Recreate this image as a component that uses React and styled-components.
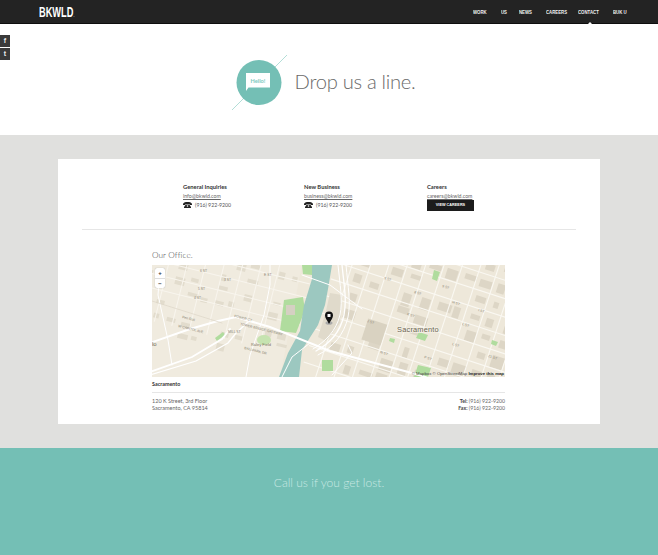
import React from "react";
import styled, { createGlobalStyle } from "styled-components";

const Global = createGlobalStyle`
  html, body { margin: 0; padding: 0; background: #fff; }
  body { font-family: "Lato", "Liberation Sans", sans-serif; color: #444; width: 658px; height: 555px; overflow: hidden; }
`;
const Page = styled.div`position: relative; width: 658px; height: 555px; overflow: hidden;`;
const Header = styled.header`
  height: 23px; background: #232323; border-bottom: 1px solid #0e0e0e;
  display: flex; align-items: center; justify-content: space-between; padding: 0 31px 0 39px; position: relative;
`;
const Logo = styled.div`
  font-family: "Liberation Sans", sans-serif; font-weight: 700; font-size: 14px;
  color: #fff; line-height: 1; width: 35px; white-space: nowrap;
  transform: scaleX(0.66); transform-origin: left center;
  span { font-size: 5px; color: #bbb; }
`;
const NavItem = styled.a`
  position: relative; display: block; font-family: "Liberation Sans", sans-serif; font-weight: 700;
  font-size: 5.4px; color: #f2f2f2; white-space: nowrap; width: ${p => p.$w}px;
  span { display: block; transform: scaleX(0.8); transform-origin: left center; }
  & + &::before { content: "/"; position: absolute; left: -8px; top: 0; color: #666; font-weight: 400; }
`;
const Nav = styled.nav`display: flex; gap: 13.6px; align-items: center;`;
const Caret = styled.i`
  position: absolute; left: 588px; bottom: -1px; width: 0; height: 0;
  border: 2px solid transparent; border-bottom-color: #fff; border-top: 0;
`;
const Social = styled.div`position: absolute; left: 0; top: 35px; display: flex; flex-direction: column; gap: 1px;`;
const SocialBtn = styled.a`
  width: 10px; height: 12px; background: #3a3a3a; color: #eee; font: 700 7px/12px "Liberation Sans", sans-serif;
  text-align: center; display: block;
`;
const Hero = styled.section`
  height: 110px; display: flex; align-items: center; justify-content: center; gap: 8px; padding-right: 11px; padding-top: 7px; box-sizing: border-box;
`;
const Title = styled.h1`
  margin: -3px 0 0; font-family: "Lato", sans-serif; font-weight: 300; font-size: 20.2px; color: #6a6a6a; white-space: nowrap; letter-spacing: -.3px;
`;
const Band = styled.section`background: #e0e0de; height: 313px; padding-top: 24px; box-sizing: border-box; margin-top: 1px;`;
const Card = styled.div`
  width: 542px; height: 265px; margin-left: 58px; background: #fff; box-sizing: border-box; padding: 0 24px;
`;
const Contacts = styled.div`
  display: grid; grid-template-columns: 121px 123px 48px; padding: 24px 0 0 101px; height: 71px; box-sizing: border-box;
  border-bottom: 1px solid #e6e6e6;
`;
const Col = styled.div`display: flex; flex-direction: column; font-size: 5.2px; line-height: 7px; color: #555;`;
const ColTitle = styled.strong`color: #333; font-weight: 700; font-size: 5.8px; margin-bottom: 3px; white-space: nowrap;`;
const Mail = styled.a`text-decoration: underline; color: #666; white-space: nowrap; margin-bottom: 1px;`;
const Phone = styled.div`display: flex; align-items: center; gap: 3px; white-space: nowrap; height: 8px; font-size: 5.2px;`;
const CareerBtn = styled.a`
  display: block; width: 47px; height: 11px; background: #1c1c1c; color: #fff; font: 700 3.8px/11px "Liberation Sans", sans-serif;
  text-align: center; white-space: nowrap; margin-top: -1px;
`;
const Office = styled.div`padding: 0 71px 0 70px;`;
const OfficeTitle = styled.h2`margin: 0; height: 35px; box-sizing: border-box; padding-top: 20px; font-weight: 300; font-size: 8.2px; line-height: 10px; color: #444; letter-spacing: .1px;`;
const MapFrame = styled.div`position: relative; width: 353px; height: 112px; overflow: hidden; background: #eee8da;`;
const Zoom = styled.div`
  position: absolute; left: 3px; top: 3px; width: 10px; height: 20px; background: #fff; border-radius: 2px; box-shadow: 0 0 1px #999;
  display: grid; grid-template-rows: 1fr 1fr; font: 700 6px/10px "Liberation Sans", sans-serif; color: #333; text-align: center;
  span + span { border-top: 1px solid #ddd; }
`;
const Attribution = styled.div`
  position: absolute; right: 1px; bottom: 1px; font: 4.3px/5px "Liberation Sans", sans-serif; color: #444; white-space: nowrap;
  b { color: #222; }
`;
const PlaceName = styled.strong`display: block; font-size: 5.4px; line-height: 7px; color: #333; padding: 4px 0 3px; height: 15px; box-sizing: border-box;`;
const AddressRow = styled.div`
  display: flex; justify-content: space-between; border-top: 1px solid #e6e6e6; padding-top: 5px; font-size: 5.5px; line-height: 7px; color: #666;
`;
const RightText = styled.div`text-align: right; font-size: 5.2px; b { color: #444; }`;
const Footer = styled.footer`
  height: 107px; background: #74bfb5; color: #c9e8e3; text-align: center; font-weight: 300; font-size: 12px; line-height: 16px; padding-top: 27px; box-sizing: border-box;
`;

const PhoneIcon = () => (
  <svg width="9" height="6" viewBox="0 0 9 6" fill="#222">
    <path d="M0 2.2C0 .6 2.2 0 4.5 0S9 .6 9 2.2V3H6.6V1.9H2.4V3H0Z" />
    <path d="M2.8 2.4h3.4L8 5v1H1V5Z" />
    <circle cx="4.5" cy="4" r=".8" fill="#fff" />
  </svg>
);

const HeroIcon = () => (
  <svg width="55" height="55" viewBox="0 0 55 55" style={{ display: "block" }}>
    <line x1="0" y1="55" x2="55" y2="0" stroke="#9fd5cd" strokeWidth=".8" />
    <circle cx="27" cy="27.5" r="22.5" fill="#74bfb5" />
    <path d="M14 18h24v14.500H16.500L14 36Z" fill="#fff" />
    <text x="26" y="27.500" textAnchor="middle" fontFamily="Lato, sans-serif" fontWeight="700" fontSize="5.600" fill="#7cc7bd">Hello!</text>
  </svg>
);

const rnd = (s) => { const x = Math.sin(s * 12.9898) * 43758.5453; return x - Math.floor(x); };

const blocks = [];
for (let i = 0; i < 14; i++) for (let j = 0; j < 9; j++) {
  const s = i * 31 + j * 7 + 1;
  if (rnd(s) < 0.3) continue;
  blocks.push({ x: 190 + i * 17.500 + rnd(s + 1) * 3, y: -25 + j * 17.500 + rnd(s + 2) * 4, w: 5 + rnd(s + 3) * 9, h: 4 + rnd(s + 4) * 9 });
}
const wBlocks = [];
for (let i = 0; i < 11; i++) for (let j = 0; j < 7; j++) {
  const s = i * 17 + j * 53 + 3;
  if (rnd(s) < 0.6) continue;
  wBlocks.push({ x: i * 14 + rnd(s + 1) * 3, y: j * 14 + rnd(s + 2) * 4, w: 4 + rnd(s + 3) * 7, h: 3 + rnd(s + 4) * 5 });
}

const gridLabels = [
  [232, 14, "9 ST"], [262, 28, "8 ST"], [290, 22, "9 ST"], [215, 57, "J ST"], [255, 50, "K ST"], [310, 60, "L ST"],
  [300, 38, "H ST"], [326, 46, "I ST"], [272, 93, "P ST"], [228, 88, "N ST"], [336, 92, "21 ST"], [300, 80, "L ST"],
];
const westLabels = [
  [48, 7, "6 ST"], [46, 25, "5 ST"], [42, 34, "4 ST"], [30, 53, "Pen Roll"], [26, 62, "W CAPITOL AVE"], [82, 52, "POWER CT"],
  [88, 60, "TOWER BRIDGE GATEWAY"], [76, 68, "MILL ST"], [92, 84, "BALLPARK DR"], [112, 11, "E ST"], [72, 16, "3 ST"],
];

const MapArt = () => (
  <svg width="353" height="112" viewBox="0 0 353 112" style={{ display: "block" }}>
    <rect width="353" height="112" fill="#eee8da" />
    <path d="M0 0H150L128 112H0Z" fill="#f0ebdf" />
    {/* west grid */}
    <g transform="rotate(14 60 40)">
      {wBlocks.map((b, i) => <rect key={i} x={b.x - 10} y={b.y - 10} width={b.w} height={b.h} fill="#e2dccd" />)}
      {[0, 1, 2, 3, 4, 5, 6, 7].map(i => <line key={i} x1={i * 18 - 10} y1="-30" x2={i * 18 - 10} y2="70" stroke="#f8f5ee" strokeWidth="1" />)}
      {[0, 1, 2, 3].map(i => <line key={i} x1="-20" y1={i * 14 - 4} x2="150" y2={i * 14 - 4} stroke="#f8f5ee" strokeWidth="1" />)}
    </g>
    {/* east grid */}
    <g transform="rotate(18 260 55)">
      {blocks.map((b, i) => <rect key={i} x={b.x} y={b.y} width={b.w} height={b.h} fill="#ddd6c6" />)}
      {Array.from({ length: 15 }, (_, i) => <line key={i} x1={186 + i * 17.500} y1="-50" x2={186 + i * 17.500} y2="170" stroke="#faf8f2" strokeWidth="1.100" />)}
      {Array.from({ length: 11 }, (_, i) => <line key={i} x1="170" y1={-29 + i * 17.500} x2="420" y2={-29 + i * 17.500} stroke="#faf8f2" strokeWidth="1.100" />)}
    </g>
    <rect x="212" y="56" width="20" height="22" fill="#d9d2c1" transform="rotate(18 222 68)" />
    <path d="M178 28L190 30 188 58 174 76 166 72 174 46Z" fill="#e0dacb" />
    {/* parks */}
    <g fill="#b0dc9e">
      <path d="M132 35L151 32 153 45 144 68 128 66Z" />
      <path d="M150 0H161L160 10 151 9Z" />
      <rect x="170" y="95" width="11" height="11" />
      <path d="M63 73L71 67 73 70 65 76Z" />
      <path d="M282 5L288 7 285 16 280 14Z" />
      <path d="M267 67L276 70 273 76 264 73Z" />
      <path d="M238 73L243 74 242 78 237 76Z" />
      <path d="M340 75L346 77 344 81 339 79Z" />
      <path d="M266 100L279 103 276 112H262Z" />
      <ellipse cx="112" cy="75" rx="7" ry="5" fill="#c6e3b0" />
    </g>
    <rect x="134" y="40" width="9" height="10" fill="#d5d0c2" />
    {/* river */}
    <path d="M160 0H180L176 24 173 40 166 60 150 85 147 112H127L136 88 148 66 152 40 160 14Z" fill="#9cc8c0" />
    {/* main roads */}
    <g fill="none" stroke="#fff" strokeLinecap="round">
      <path d="M-2 78L38 64 66 56 84 52 118 62 178 86 260 108 300 120" strokeWidth="2" />
      <path d="M-2 107L40 92 70 74 78 64" strokeWidth="1.800" />
      <path d="M-2 110L44 96 76 78 84 68 96 57" strokeWidth="1.300" />
      <path d="M190 0C192 20 195 35 192 50 188 68 178 78 164 86" strokeWidth="1.300" />
      <path d="M186 0C188 20 191 35 188 50 184 66 174 76 161 84" strokeWidth="1" />
      <path d="M194 0C196 22 199 38 196 52 192 70 181 82 166 90" strokeWidth="1" />
      <path d="M150 10L178 20 210 44" strokeWidth="1" />
      <path d="M8 5L6 30 16 75 20 100" strokeWidth="1" />
      <path d="M130 112L140 92 158 78" strokeWidth="1" />
      <path d="M94 112L98 90 112 50 118 20 118 0" strokeWidth="1" />
      <path d="M0 36L70 58" strokeWidth=".7" stroke="#dcd6c7" />
      <path d="M180 110L200 88 196 80" strokeWidth="1" />
    </g>
    <g fontFamily="Liberation Sans, sans-serif" fontSize="3.400" fill="#8a8472">
      {gridLabels.map(([x, y, t]) => <text key={t + x} x={x} y={y} transform={`rotate(18 ${x} ${y})`}>{t}</text>)}
      {westLabels.map(([x, y, t]) => <text key={t + x} x={x} y={y} transform={`rotate(${t.includes("ST") ? 0 : 14} ${x} ${y})`}>{t}</text>)}
    </g>
    <text x="0" y="81" fontFamily="Liberation Sans, sans-serif" fontSize="6" fill="#6f6a5a">lo</text>
    <text x="109" y="81" textAnchor="middle" fontFamily="Liberation Sans, sans-serif" fontSize="4" fill="#7d7762">Raley Field</text>
    <text x="266" y="67" textAnchor="middle" fontFamily="Liberation Sans, sans-serif" fontSize="7.400" letterSpacing=".2" fill="#6a6350" stroke="#f5f1e6" strokeWidth="1.500" paintOrder="stroke">Sacramento</text>
    {/* marker */}
    <ellipse cx="177" cy="58" rx="3.500" ry="1.800" fill="#aaa" />
    <path d="M177 59C175 55 173 53 173 50.500A4 4 0 0 1 181 50.500C181 53 179 55 177 59Z" fill="#111" />
    <rect x="175.500" y="49" width="3" height="3" fill="#fff" />
  </svg>
);

export default function App() {
  return (
    <Page>
      <Global />
      <Header>
        <Logo>BKWLD<span>.</span></Logo>
        <Nav>
          <NavItem $w={14}><span>WORK</span></NavItem>
          <NavItem $w={5}><span>US</span></NavItem>
          <NavItem $w={13}><span>NEWS</span></NavItem>
          <NavItem $w={19}><span>CAREERS</span></NavItem>
          <NavItem $w={21}><span>CONTACT</span></NavItem>
          <NavItem $w={14}><span>BUK U</span></NavItem>
        </Nav>
        <Caret />
      </Header>
      <Social>
        <SocialBtn>f</SocialBtn>
        <SocialBtn>t</SocialBtn>
      </Social>
      <Hero>
        <HeroIcon />
        <Title>Drop us a line.</Title>
      </Hero>
      <Band>
        <Card>
          <Contacts>
            <Col>
              <ColTitle>General Inquiries</ColTitle>
              <Mail>info@bkwld.com</Mail>
              <Phone><PhoneIcon />(916) 922-9200</Phone>
            </Col>
            <Col>
              <ColTitle>New Business</ColTitle>
              <Mail>business@bkwld.com</Mail>
              <Phone><PhoneIcon />(916) 922-9200</Phone>
            </Col>
            <Col>
              <ColTitle>Careers</ColTitle>
              <Mail>careers@bkwld.com</Mail>
              <CareerBtn>VIEW CAREERS</CareerBtn>
            </Col>
          </Contacts>
          <Office>
            <OfficeTitle>Our Office.</OfficeTitle>
            <MapFrame>
              <MapArt />
              <Zoom><span>+</span><span>−</span></Zoom>
              <Attribution>© Mapbox © OpenStreetMap <b>Improve this map</b></Attribution>
            </MapFrame>
            <PlaceName>Sacramento</PlaceName>
            <AddressRow>
              <div>120 K Street, 3rd Floor<br />Sacramento, CA 95814</div>
              <RightText><b>Tel:</b> (916) 922-9200<br /><b>Fax:</b> (916) 922-9200</RightText>
            </AddressRow>
          </Office>
        </Card>
      </Band>
      <Footer>Call us if you get lost.</Footer>
    </Page>
  );
}
